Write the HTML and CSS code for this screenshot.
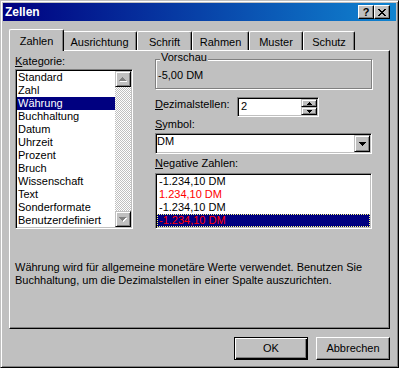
FILE: index.html
```html
<!DOCTYPE html>
<html lang="de">

<head>
	<meta charset="UTF-8">
	<title>Zellen</title>
	<link rel="stylesheet" href="styles.css">
</head>

<body>
	<div class="window">
		<div class="titlebar">
			<span class="title">Zellen</span>
			<div class="caption-buttons">
				<button class="caption-btn">?</button>
				<button class="caption-btn">
					<svg width="8" height="7" viewBox="0 0 8 7" shape-rendering="crispEdges"><path fill="#000" d="M0 0h2v1H0zM6 0h2v1H6zM1 1h2v1H1zM5 1h2v1H5zM2 2h4v1H2zM3 3h2v1H3zM2 4h4v1H2zM1 5h2v1H1zM5 5h2v1H5zM0 6h2v1H0zM6 6h2v1H6z"/></svg>
				</button>
			</div>
		</div>

		<div class="content">
			<div class="tabs">
				<div class="tab active tab-zahlen">Zahlen</div>
				<div class="tab tab-ausrichtung">Ausrichtung</div>
				<div class="tab tab-schrift">Schrift</div>
				<div class="tab tab-rahmen">Rahmen</div>
				<div class="tab tab-muster">Muster</div>
				<div class="tab tab-schutz">Schutz</div>
			</div>

			<div class="panel">
				<div class="panel-cols">
					<div class="col-left">
						<div class="label"><u>K</u>ategorie:</div>
						<div class="listbox">
							<div class="items">
								<div class="item">Standard</div>
								<div class="item">Zahl</div>
								<div class="item selected">Währung</div>
								<div class="item">Buchhaltung</div>
								<div class="item">Datum</div>
								<div class="item">Uhrzeit</div>
								<div class="item">Prozent</div>
								<div class="item">Bruch</div>
								<div class="item">Wissenschaft</div>
								<div class="item">Text</div>
								<div class="item">Sonderformate</div>
								<div class="item">Benutzerdefiniert</div>
							</div>
							<div class="scrollbar">
								<div class="sb-btn">
									<svg width="8" height="5" viewBox="0 0 8 5" shape-rendering="crispEdges"><path fill="#fff" d="M4 1h1v1H4zM3 2h3v1H3zM2 3h5v1H2zM1 4h7v1H1z"/><path fill="#808080" d="M3 0h1v1H3zM2 1h3v1H2zM1 2h5v1H1zM0 3h7v1H0z"/></svg>
								</div>
								<div class="sb-track"></div>
								<div class="sb-btn">
									<svg width="8" height="5" viewBox="0 0 8 5" shape-rendering="crispEdges"><path fill="#fff" d="M1 1h7v1H1zM2 2h5v1H2zM3 3h3v1H3zM4 4h1v1H4z"/><path fill="#808080" d="M0 0h7v1H0zM1 1h5v1H1zM2 2h3v1H2zM3 3h1v1H3z"/></svg>
								</div>
							</div>
						</div>
					</div>

					<div class="col-right">
						<div class="group">
							<span class="group-label">Vorschau</span>
							<div class="preview">-5,00 DM</div>
						</div>

						<div class="field-row">
							<div class="label row-label"><u>D</u>ezimalstellen:</div>
							<div class="spinner">
								<div class="spin-value">2</div>
								<div class="spin-btns">
									<div class="spin-btn">
										<svg width="5" height="3" viewBox="0 0 5 3" shape-rendering="crispEdges"><path fill="#000" d="M2 0h1v1H2zM1 1h3v1H1zM0 2h5v1H0z"/></svg>
									</div>
									<div class="spin-btn">
										<svg width="5" height="3" viewBox="0 0 5 3" shape-rendering="crispEdges"><path fill="#000" d="M0 0h5v1H0zM1 1h3v1H1zM2 2h1v1H2z"/></svg>
									</div>
								</div>
							</div>
						</div>

						<div class="label symbol-label"><u>S</u>ymbol:</div>
						<div class="combo">
							<div class="combo-value">DM</div>
							<div class="combo-btn">
								<svg width="7" height="4" viewBox="0 0 7 4" shape-rendering="crispEdges"><path fill="#000" d="M0 0h7v1H0zM1 1h5v1H1zM2 2h3v1H2zM3 3h1v1H3z"/></svg>
							</div>
						</div>

						<div class="label negative-label"><u>N</u>egative Zahlen:</div>
						<div class="neg-list">
							<div class="neg-item">-1.234,10 DM</div>
							<div class="neg-item red">1.234,10 DM</div>
							<div class="neg-item">-1.234,10 DM</div>
							<div class="neg-item red selected">-1.234,10 DM</div>
						</div>
					</div>
				</div>

				<p class="description">Währung wird für allgemeine monetäre Werte verwendet. Benutzen Sie<br>Buchhaltung, um die Dezimalstellen in einer Spalte auszurichten.</p>
			</div>

			<div class="buttons">
				<button class="btn default">OK</button>
				<button class="btn">Abbrechen</button>
			</div>
		</div>
	</div>
</body>

</html>
```

FILE: styles.css
```css
* {
	box-sizing: border-box;
}

body {
	margin: 0;
	background: #c0c0c0;
	font-family: "Liberation Sans", Arial, sans-serif;
	font-size: 11px;
	line-height: 13px;
	color: #000;
}

button {
	font: inherit;
	color: #000;
	margin: 0;
	padding: 0;
}

.window {
	width: 399px;
	height: 368px;
	padding: 2px;
	background: #c0c0c0;
	border: 1px solid;
	border-color: #c0c0c0 #000 #000 #c0c0c0;
	box-shadow: inset 1px 1px #fff, inset -1px -1px #808080;
}

/* title bar */
.titlebar {
	height: 18px;
	display: flex;
	align-items: center;
	justify-content: space-between;
	padding: 0 6px 0 2px;
	background: linear-gradient(to right, #000080, #1084d0);
	color: #fff;
}

.title {
	font-weight: bold;
	font-size: 12px;
}

.caption-buttons {
	display: flex;
}

.caption-btn {
	width: 16px;
	height: 14px;
	display: flex;
	align-items: center;
	justify-content: center;
	background: #c0c0c0;
	border: 1px solid;
	border-color: #fff #000 #000 #fff;
	box-shadow: inset -1px -1px #808080;
	font-weight: bold;
	font-size: 11px;
	line-height: 11px;
}

.content {
	padding: 8px 6px 0 6px;
}

/* tabs */
.tabs {
	display: flex;
	align-items: flex-end;
	height: 21px;
	padding-left: 2px;
}

.tab {
	height: 19px;
	padding-top: 2px;
	display: flex;
	align-items: center;
	justify-content: center;
	background: #c0c0c0;
	border: 1px solid;
	border-bottom: 0;
	border-color: #fff #000 #000 #fff;
	border-radius: 2px 2px 0 0;
	box-shadow: inset -1px 0 #808080;
}

.tab.active {
	position: relative;
	z-index: 1;
	height: 22px;
	margin: 0 -2px -1px -2px;
}

.tab-zahlen { width: 55px; }
.tab-ausrichtung { width: 75px; }
.tab-schrift { width: 55px; }
.tab-rahmen { width: 57px; }
.tab-muster { width: 54px; }
.tab-schutz { width: 52px; }

.panel {
	height: 279px;
	border: 1px solid;
	border-color: #fff #000 #000 #fff;
	box-shadow: inset -1px -1px #808080;
}

.panel-cols {
	display: flex;
	gap: 22px;
	padding-left: 5px;
}

.col-left {
	width: 118px;
	padding-top: 4px;
}

.col-right {
	width: 217px;
}

u {
	text-decoration-thickness: 1px;
	text-underline-offset: 1px;
}

/* sunken boxes */
.listbox,
.spinner,
.combo,
.neg-list {
	background: #fff;
	border: 1px solid;
	border-color: #808080 #fff #fff #808080;
	box-shadow: inset 1px 1px #000, inset -1px -1px #c0c0c0;
	padding: 1px;
}

.listbox {
	margin-top: 1px;
	height: 160px;
	display: flex;
}

.items {
	flex: 1;
}

.item {
	height: 13px;
	padding-left: 1px;
	white-space: nowrap;
}

.item.selected {
	background: #000080;
	color: #fff;
}

.scrollbar {
	width: 16px;
	display: flex;
	flex-direction: column;
	background: repeating-conic-gradient(#fff 0 25%, #c0c0c0 0 50%) 0 0 / 2px 2px;
}

.sb-btn,
.spin-btn,
.combo-btn {
	display: flex;
	align-items: center;
	justify-content: center;
	background: #c0c0c0;
	border: 1px solid;
	border-color: #c0c0c0 #000 #000 #c0c0c0;
	box-shadow: inset 1px 1px #fff, inset -1px -1px #808080;
}

.sb-btn {
	height: 16px;
}

.sb-track {
	flex: 1;
}

/* preview group */
.group {
	margin-top: 8px;
	height: 30px;
	padding-left: 2px;
	border: 1px solid #808080;
	box-shadow: inset 1px 1px #fff, 1px 1px #fff;
}

.group-label {
	display: block;
	width: max-content;
	margin: -9px 0 0 2px;
	padding: 0 1px;
	background: #c0c0c0;
}

.preview {
	margin-top: 5px;
}

.field-row {
	display: flex;
	margin-top: 8px;
}

.row-label {
	width: 82px;
	margin-top: 1px;
}

.spinner {
	width: 82px;
	height: 20px;
	display: flex;
}

.spin-value {
	flex: 1;
	padding: 1px 0 0 2px;
}

.spin-btns {
	width: 16px;
	display: flex;
	flex-direction: column;
}

.spin-btn {
	height: 8px;
}

.symbol-label {
	margin-top: 1px;
}

.combo {
	margin-top: 2px;
	height: 21px;
	display: flex;
}

.combo-value {
	flex: 1;
}

.combo-btn {
	width: 16px;
	height: 17px;
}

.negative-label {
	margin-top: 3px;
}

.neg-list {
	margin-top: 3px;
	height: 56px;
}

.neg-item {
	height: 13px;
	padding-left: 2px;
}

.neg-item.red {
	color: #ff0000;
}

.neg-item.selected {
	background: #000080;
	outline: 1px dotted #ffff80;
	outline-offset: -1px;
}

.description {
	margin: 32px 0 0 0;
	padding-left: 5px;
	white-space: nowrap;
}

/* dialog buttons */
.buttons {
	display: flex;
	justify-content: flex-end;
	gap: 8px;
	margin-top: 8px;
}

.btn {
	width: 74px;
	height: 23px;
	background: #c0c0c0;
	border: 1px solid;
	border-color: #fff #000 #000 #fff;
	box-shadow: inset -1px -1px #808080;
}

.btn.default {
	border-color: #000;
	box-shadow: inset 1px 1px #fff, inset -1px -1px #000, inset -2px -2px #808080;
}
```
